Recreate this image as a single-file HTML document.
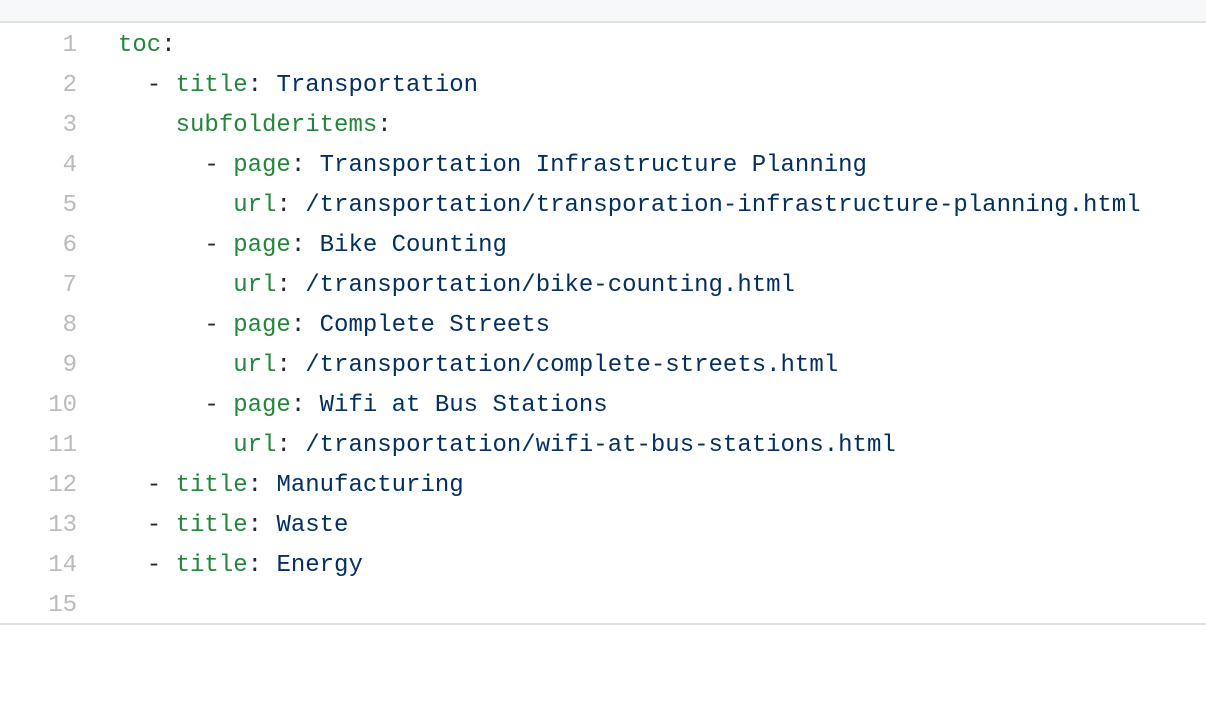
<!DOCTYPE html>
<html><head><style>
body{margin:0;background:#fff;width:1206px;height:704px;overflow:hidden;font-family:"Liberation Mono",monospace;}
.top{height:21px;background:#f6f8fa;border-bottom:2px solid #dfe2e5;}
.code{border-bottom:2px solid #dfe2e5;padding-top:3px;padding-bottom:0;height:602px;box-sizing:border-box;}
.l{height:40px;line-height:40px;font-size:24px;white-space:pre;display:flex;}
.n{width:77px;text-align:right;color:#bbbbbb;padding-right:41px;flex:none;}
.k{color:#22863a}.v{color:#032f62}.p{color:#24292e}
</style></head><body>
<div class="top"></div>
<div class="code">
<div class="l"><span class="n">1</span><span><span class="k">toc</span><span class="p">:</span></span></div>
<div class="l"><span class="n">2</span><span class="p">  - <span class="k">title</span>: <span class="v">Transportation</span></span></div>
<div class="l"><span class="n">3</span><span class="p">    <span class="k">subfolderitems</span>:</span></div>
<div class="l"><span class="n">4</span><span class="p">      - <span class="k">page</span>: <span class="v">Transportation Infrastructure Planning</span></span></div>
<div class="l"><span class="n">5</span><span class="p">        <span class="k">url</span>: <span class="v">/transportation/transporation-infrastructure-planning.html</span></span></div>
<div class="l"><span class="n">6</span><span class="p">      - <span class="k">page</span>: <span class="v">Bike Counting</span></span></div>
<div class="l"><span class="n">7</span><span class="p">        <span class="k">url</span>: <span class="v">/transportation/bike-counting.html</span></span></div>
<div class="l"><span class="n">8</span><span class="p">      - <span class="k">page</span>: <span class="v">Complete Streets</span></span></div>
<div class="l"><span class="n">9</span><span class="p">        <span class="k">url</span>: <span class="v">/transportation/complete-streets.html</span></span></div>
<div class="l"><span class="n">10</span><span class="p">      - <span class="k">page</span>: <span class="v">Wifi at Bus Stations</span></span></div>
<div class="l"><span class="n">11</span><span class="p">        <span class="k">url</span>: <span class="v">/transportation/wifi-at-bus-stations.html</span></span></div>
<div class="l"><span class="n">12</span><span class="p">  - <span class="k">title</span>: <span class="v">Manufacturing</span></span></div>
<div class="l"><span class="n">13</span><span class="p">  - <span class="k">title</span>: <span class="v">Waste</span></span></div>
<div class="l"><span class="n">14</span><span class="p">  - <span class="k">title</span>: <span class="v">Energy</span></span></div>
<div class="l"><span class="n">15</span><span></span></div>
</div>
</body></html>
